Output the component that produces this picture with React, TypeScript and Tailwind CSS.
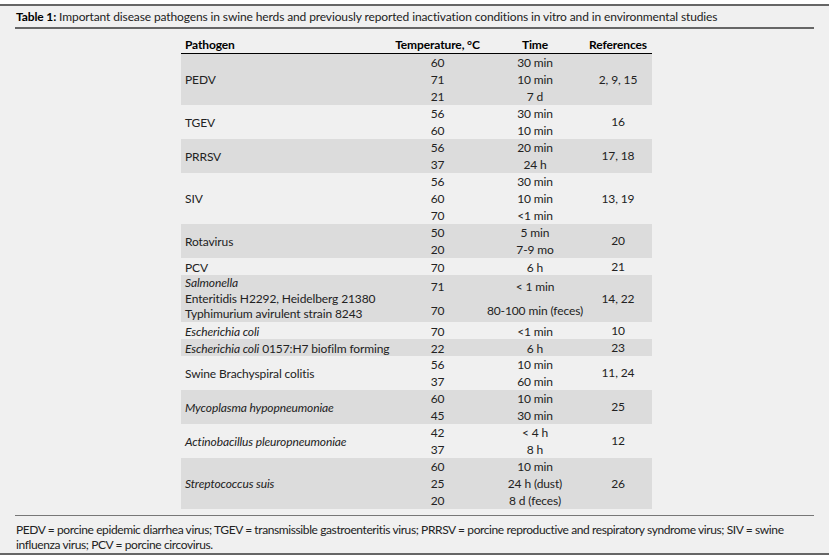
import type { ReactNode } from "react";

type Row = {
  pathogen: ReactNode;
  temps: string[];
  times: string[];
  refs: string;
  h: string;
  tight?: boolean;
};

const rows: Row[] = [
  { pathogen: "PEDV", temps: ["60", "71", "21"], times: ["30 min", "10 min", "7 d"], refs: "2, 9, 15", h: "h-[51px]" },
  { pathogen: "TGEV", temps: ["56", "60"], times: ["30 min", "10 min"], refs: "16", h: "h-[34px]" },
  { pathogen: "PRRSV", temps: ["56", "37"], times: ["20 min", "24 h"], refs: "17, 18", h: "h-[34px]" },
  {
    pathogen: "SIV",
    temps: ["56", "60", "70"],
    times: ["30 min", "10 min", "<1 min"],
    refs: "13, 19",
    h: "h-[51px]",
  },
  { pathogen: "Rotavirus", temps: ["50", "20"], times: ["5 min", "7-9 mo"], refs: "20", h: "h-[34px]" },
  { pathogen: "PCV", temps: ["70"], times: ["6 h"], refs: "21", h: "h-[17px]" },
  {
    pathogen: (
      <>
        <i>Salmonella</i>
        <br />
        Enteritidis H2292, Heidelberg 21380
        <br />
        Typhimurium avirulent strain 8243
      </>
    ),
    temps: ["71", "70"],
    times: ["< 1 min", "80-100 min (feces)"],
    refs: "14, 22",
    h: "h-[47px]",
    tight: true,
  },
  { pathogen: <i>Escherichia coli</i>, temps: ["70"], times: ["<1 min"], refs: "10", h: "h-[17px]" },
  {
    pathogen: (
      <>
        <i>Escherichia coli</i> 0157:H7 biofilm forming
      </>
    ),
    temps: ["22"],
    times: ["6 h"],
    refs: "23",
    h: "h-[17px]",
  },
  {
    pathogen: "Swine Brachyspiral colitis",
    temps: ["56", "37"],
    times: ["10 min", "60 min"],
    refs: "11, 24",
    h: "h-[34px]",
  },
  {
    pathogen: <i>Mycoplasma hypopneumoniae</i>,
    temps: ["60", "45"],
    times: ["10 min", "30 min"],
    refs: "25",
    h: "h-[34px]",
  },
  {
    pathogen: <i>Actinobacillus pleuropneumoniae</i>,
    temps: ["42", "37"],
    times: ["< 4 h", "8 h"],
    refs: "12",
    h: "h-[34px]",
  },
  {
    pathogen: <i>Streptococcus suis</i>,
    temps: ["60", "25", "20"],
    times: ["10 min", "24 h (dust)", "8 d (feces)"],
    refs: "26",
    h: "h-[51px]",
  },
];

const Stack = ({ items }: { items: string[] }) => (
  <div className="flex flex-col justify-around items-center overflow-hidden">
    {items.map((v, i) => (
      <div key={i} className="h-[17px] leading-[17px] whitespace-nowrap">
        {v}
      </div>
    ))}
  </div>
);

export default function App() {
  return (
    <div
      className="pt-[4px] bg-white text-[12px] tracking-[-0.12px] text-[#222]"
      style={{ fontFamily: "Lato, 'Noto Sans', sans-serif" }}
    >
      <div className="w-[829px] h-[551px] bg-[#f0f0f0] border-t-2 border-b-2 border-[#666] px-[15px] flex flex-col">
        {/* Caption */}
        <div className="h-[23px] shrink-0 flex items-center pl-[1px] border-b-2 border-[#666] whitespace-nowrap">
          <span>
            <b className="text-black">Table 1:</b> Important disease pathogens in swine herds and previously reported
            inactivation conditions in vitro and in environmental studies
          </span>
        </div>

        {/* Table */}
        <div className="mt-[7px] ml-[166px] w-[471px] shrink-0">
          <div className="grid grid-cols-[208px_97px_98px_68px] h-[18px] items-center border-b border-black font-bold text-black">
            <div className="pl-1">Pathogen</div>
            <div className="text-center whitespace-nowrap">Temperature, °C</div>
            <div className="text-center">Time</div>
            <div className="text-center">References</div>
          </div>
          {rows.map((r, i) => (
            <div
              key={i}
              className={`grid grid-cols-[208px_97px_98px_68px] overflow-hidden ${r.h} ${
                i % 2 === 0 ? "bg-[#dcdcdc]" : ""
              }`}
            >
              <div
                className={`pl-1 flex items-center whitespace-nowrap ${
                  r.tight ? "leading-[15.6px]" : "leading-[17px]"
                }`}
              >
                <div>{r.pathogen}</div>
              </div>
              <Stack items={r.temps} />
              <Stack items={r.times} />
              <div className="flex items-center justify-center">{r.refs}</div>
            </div>
          ))}
        </div>

        {/* Footnote */}
        <div className="mt-[6px] border-t border-[#777] pt-[6px] pl-[1px] leading-[15px] tracking-[-0.4px]">
          PEDV = porcine epidemic diarrhea virus; TGEV = transmissible gastroenteritis virus; PRRSV = porcine
          reproductive and respiratory syndrome virus; SIV = swine influenza virus; PCV = porcine circovirus.
        </div>
      </div>
    </div>
  );
}
